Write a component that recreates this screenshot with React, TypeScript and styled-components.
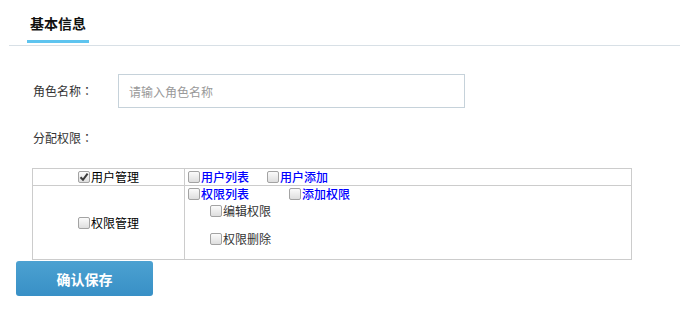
import React from 'react';
import styled, {createGlobalStyle} from 'styled-components';

const GlobalStyle = createGlobalStyle`
  html, body {
    margin: 0;
    padding: 0;
    background: #ffffff;
  }
  body {
    font-family: "Noto Sans CJK SC", "Liberation Sans", sans-serif;
    font-size: 12px;
    color: #333333;
  }
`;

const Page = styled.div`
  width: 680px;
  height: 312px;
  overflow: hidden;
`;

const Header = styled.div`
  margin-left: 9px;
  height: 45px;
  border-bottom: 1px solid #d8e0e6;
  display: flex;
  align-items: flex-start;
`;

const Tab = styled.div`
  margin-left: 18px;
  width: 62px;
  height: 40px;
  border-bottom: 3px solid #5ec4ef;
  display: flex;
  justify-content: center;
  align-items: flex-end;
`;

const TabText = styled.span`
  font-size: 14px;
  font-weight: bold;
  color: #111111;
  line-height: 16px;
  margin-bottom: 9px;
`;

const Form = styled.div`
  padding-top: 28px;
`;

const FieldRow = styled.div<{$mt?: number}>`
  display: flex;
  align-items: center;
  margin-top: ${p => p.$mt ?? 0}px;
`;

const Label = styled.label`
  width: 85px;
  padding-left: 33px;
  line-height: 20px;
  font-size: 12px;
  color: #333333;
  flex-shrink: 0;
`;

// full-width colon sits centred in its box, as in the reference
const Colon = styled.span`
  font-family: "Noto Sans CJK TC", "Noto Sans CJK SC", sans-serif;
`;

const TextInput = styled.input`
  width: 347px;
  height: 34px;
  box-sizing: border-box;
  border: 1px solid #c6d2da;
  padding: 0 10px;
  font-family: inherit;
  font-size: 12px;
  color: #333;
  outline: none;
  &::placeholder {
    color: #999999;
  }
`;

const PermTable = styled.table`
  margin: 20px 0 0 32px;
  width: 600px;
  border-collapse: collapse;
  td {
    border: 1px solid #cccccc;
    padding: 0;
    vertical-align: top;
  }
`;

const LeftCell = styled.td`
  width: 151px;
  && {
    vertical-align: middle;
  }
`;

const Centered = styled.div`
  display: flex;
  justify-content: center;
  align-items: center;
`;

const Line = styled.div<{$h: number}>`
  display: flex;
  align-items: center;
  height: ${p => p.$h}px;
  padding-left: 3px;
`;

const Item = styled.span<{$ml?: number}>`
  display: inline-flex;
  align-items: center;
  margin-left: ${p => p.$ml ?? 0}px;
`;

const ItemText = styled.span<{$tone: 'black' | 'link' | 'gray'}>`
  font-size: 12px;
  line-height: 14px;
  color: ${p => (p.$tone === 'link' ? '#0000ff' : p.$tone === 'gray' ? '#333333' : '#000000')};
  font-weight: ${p => (p.$tone === 'link' ? 500 : 400)};
`;

const SubList = styled.div`
  padding: 3px 0 13px 25px;
  display: flex;
  flex-direction: column;
  gap: 14px;
`;

const Box = styled.span`
  width: 10px;
  height: 10px;
  border: 1px solid #a3a3a3;
  border-radius: 2px;
  background: linear-gradient(#fbfbfb, #dedede);
  margin-right: 1px;
  display: inline-flex;
  align-items: center;
  justify-content: center;
  flex-shrink: 0;
`;

const Check = ({checked}: {checked?: boolean}) => (
  <Box>
    {checked && (
      <svg width="10" height="10" viewBox="0 0 10 10">
        <path d="M1.5 5.2 L4 7.8 L8.6 1.6" fill="none" stroke="#3a3a3a" strokeWidth="2" />
      </svg>
    )}
  </Box>
);

const SaveButton = styled.button`
  margin: 1px 0 0 16px;
  width: 137px;
  height: 35px;
  border: none;
  border-radius: 3px;
  background: linear-gradient(#4ca1d1, #3890c6);
  color: #ffffff;
  font-family: inherit;
  font-size: 14px;
  font-weight: bold;
  cursor: pointer;
  display: block;
`;

const App = () => (
  <Page>
    <GlobalStyle />
    <Header>
      <Tab>
        <TabText>基本信息</TabText>
      </Tab>
    </Header>
    <Form>
      <FieldRow>
        <Label>
          角色名称<Colon>：</Colon>
        </Label>
        <TextInput placeholder="请输入角色名称" />
      </FieldRow>
      <FieldRow $mt={20}>
        <Label>
          分配权限<Colon>：</Colon>
        </Label>
      </FieldRow>
      <PermTable>
        <tbody>
          <tr>
            <LeftCell>
              <Centered>
                <Check checked />
                <ItemText $tone="black">用户管理</ItemText>
              </Centered>
            </LeftCell>
            <td>
              <Line $h={16}>
                <Item>
                  <Check />
                  <ItemText $tone="link">用户列表</ItemText>
                </Item>
                <Item $ml={18}>
                  <Check />
                  <ItemText $tone="link">用户添加</ItemText>
                </Item>
              </Line>
            </td>
          </tr>
          <tr>
            <LeftCell>
              <Centered>
                <Check />
                <ItemText $tone="black">权限管理</ItemText>
              </Centered>
            </LeftCell>
            <td>
              <Line $h={15}>
                <Item>
                  <Check />
                  <ItemText $tone="link">权限列表</ItemText>
                </Item>
                <Item $ml={40}>
                  <Check />
                  <ItemText $tone="link">添加权限</ItemText>
                </Item>
              </Line>
              <SubList>
                <Item>
                  <Check />
                  <ItemText $tone="gray">编辑权限</ItemText>
                </Item>
                <Item>
                  <Check />
                  <ItemText $tone="gray">权限删除</ItemText>
                </Item>
              </SubList>
            </td>
          </tr>
        </tbody>
      </PermTable>
      <SaveButton>确认保存</SaveButton>
    </Form>
  </Page>
);

export default App;
